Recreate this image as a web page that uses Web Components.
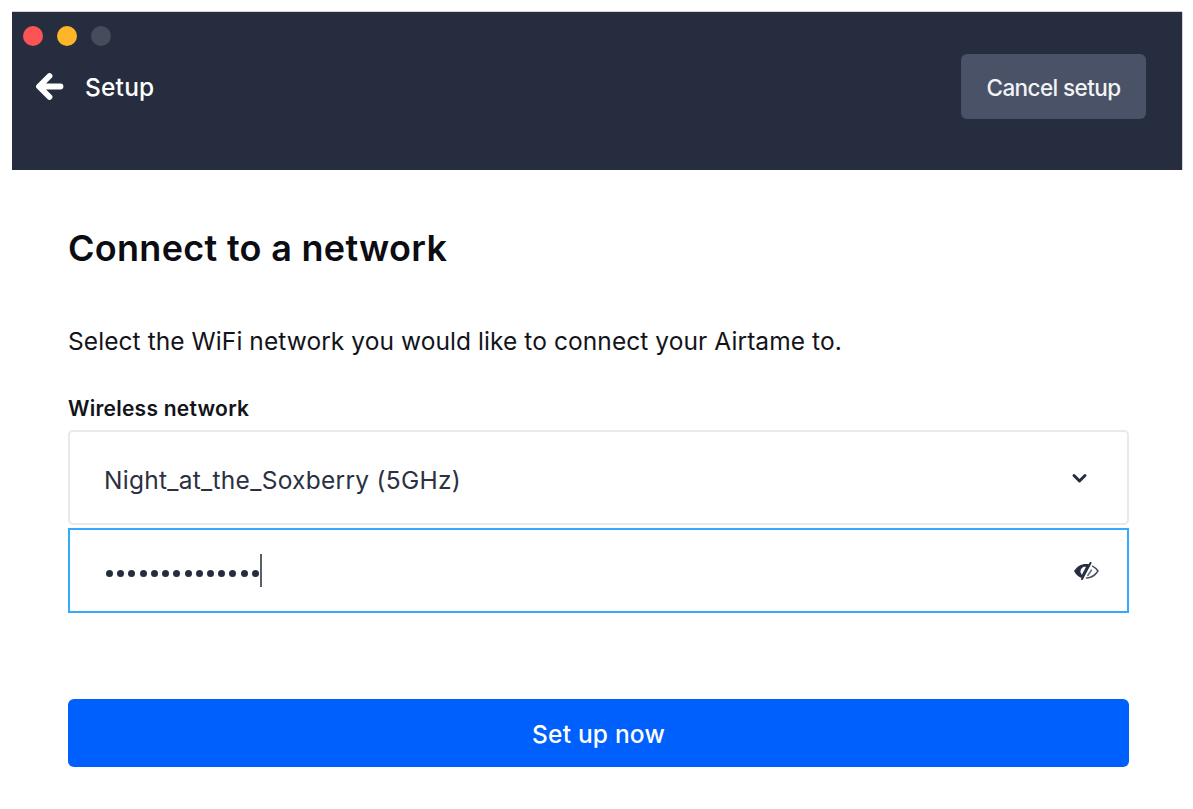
<!DOCTYPE html>
<html><head><meta charset="utf-8">
<style>
html,body{margin:0;padding:0;background:#fff;}
body{font-family:Inter,"Liberation Sans",sans-serif;width:1193px;height:809px;overflow:hidden;}
</style></head>
<body>
<setup-window>
  <setup-header slot="header" title="Setup" action="Cancel setup"></setup-header>
  <h-title>Connect to a network</h-title>
  <intro-text>Select the WiFi network you would like to connect your Airtame to.</intro-text>
  <field-label>Wireless network</field-label>
  <select-box>Night_at_the_Soxberry (5GHz)</select-box>
  <password-box></password-box>
  <primary-button>Set up now</primary-button>
</setup-window>
<script>
function def(name, html){
  customElements.define(name, class extends HTMLElement{
    constructor(){super();this.attachShadow({mode:'open'}).innerHTML=html;}
  });
}
def('setup-window',`<style>
:host{display:block;margin:12px 11px 0 12px;}
.body{display:flex;flex-direction:column;padding:0 53px 0 56px;}
</style><slot name="header"></slot><div class="body"><slot></slot></div>`);
customElements.define('setup-header', class extends HTMLElement{
  connectedCallback(){
    if(this.shadowRoot) return;
    this.attachShadow({mode:'open'}).innerHTML=`<style>
:host{display:block;height:158px;background:#262d3f;box-shadow:0 -1px 0 #d4d5d9,1px 0 0 #d4d5d9;}
.lights{display:flex;gap:14px;padding:14px 0 0 11px;}
.lights i{width:20px;height:20px;border-radius:50%;display:block;}
.row{display:flex;justify-content:space-between;align-items:flex-start;padding:0 36px 0 23px;margin-top:8px;}
.left{display:flex;align-items:center;gap:20px;height:65px;padding-top:1px;box-sizing:border-box;color:#fff;font-size:24.5px;font-weight:500;letter-spacing:.2px;}
svg{display:block;margin-top:-1px}
.btn{display:flex;align-items:center;justify-content:center;box-sizing:border-box;padding-top:2px;width:185px;height:65px;border-radius:6px;background:#4a5268;color:#f2f3f5;font-size:22.5px;font-weight:500;letter-spacing:-.6px;}
</style>
<div class="lights"><i style="background:#fc5454"></i><i style="background:#fdb627"></i><i style="background:#474c5c"></i></div>
<div class="row"><div class="left"><svg width="30" height="30" viewBox="0 0 30 30"><path d="M14.500 4 4 14.500 14.500 25M6 14.500H25.500" fill="none" stroke="#fff" stroke-width="5.800" stroke-linecap="round" stroke-linejoin="round"/></svg><span>${this.getAttribute('title')}</span></div><div class="btn" role="button">${this.getAttribute('action')}</div></div>`;
  }
});
def('h-title',`<style>:host{display:block;margin-top:54px;font-size:36px;line-height:48px;font-weight:600;color:#0b0d12;letter-spacing:.3px;}</style><slot></slot>`);
def('intro-text',`<style>:host{display:block;margin-top:49px;font-size:24.5px;line-height:40px;color:#12141a;letter-spacing:.075px;}</style><slot></slot>`);
def('field-label',`<style>:host{display:block;margin-top:34px;font-size:21px;line-height:28px;font-weight:600;color:#12141a;letter-spacing:.25px;}</style><slot></slot>`);
def('select-box',`<style>:host{display:flex;align-items:center;justify-content:space-between;box-sizing:border-box;height:95px;margin-top:7px;padding:4px 39px 0 34px;border:2px solid #e8e9ea;border-radius:5px;font-size:24.5px;color:#2b3142;letter-spacing:.28px;}svg{display:block;margin-top:-3px}</style><slot></slot><svg width="17" height="13" viewBox="0 0 17 13"><path d="M3 3.500 8.500 9 14 3.500" fill="none" stroke="#262d3f" stroke-width="3" stroke-linecap="round" stroke-linejoin="round"/></svg>`);
def('password-box',`<style>:host{display:flex;align-items:center;justify-content:space-between;box-sizing:border-box;height:85px;margin-top:3px;padding:0 27px 0 35px;border:2px solid #36a9fb;}
.v{display:flex;align-items:center;height:34px;position:relative;padding-left:1px}
.v i{display:block;width:7px;height:7px;border-radius:50%;background:#262d3f;margin-right:4.220px;position:relative;top:3px}
.c{width:2px;height:33px;background:#5a5f6c;margin-left:-2.900px}
svg{display:block}</style>
<div class="v" role="textbox">${'<i></i>'.repeat(14)}<div class="c"></div></div>
<svg width="28" height="22" viewBox="0 0 28 22"><path d="M2 11C5 6.500 9 4 14 4c1.500 0 2.500.1 3.300.4L9.700 18C6.500 17 4 14.500 2 11Z" fill="#262d3f"/><path d="M8.600 12.300C8 8.500 11 6.500 14 6.800L9.800 15Z" fill="#fff"/><path d="M20.500 6.200C22.700 7.300 24.600 9 26 11c-2.800 4.300-6.700 6.800-11.500 7" fill="none" stroke="#4a5062" stroke-width="1.500" stroke-linecap="round"/><path d="M18.500 3 10 19" stroke="#262d3f" stroke-width="2" stroke-linecap="round"/><path d="M19.500 10 15.800 15.500" fill="none" stroke="#6a7080" stroke-width="1.500" stroke-linecap="round"/></svg>`);
def('primary-button',`<style>:host{display:flex;align-items:center;justify-content:center;box-sizing:border-box;padding-top:2px;height:68px;margin-top:86px;border-radius:6px;background:#0060fe;color:#fff;font-size:24.5px;font-weight:500;letter-spacing:.2px;}</style><slot></slot>`);
</script>
</body></html>
